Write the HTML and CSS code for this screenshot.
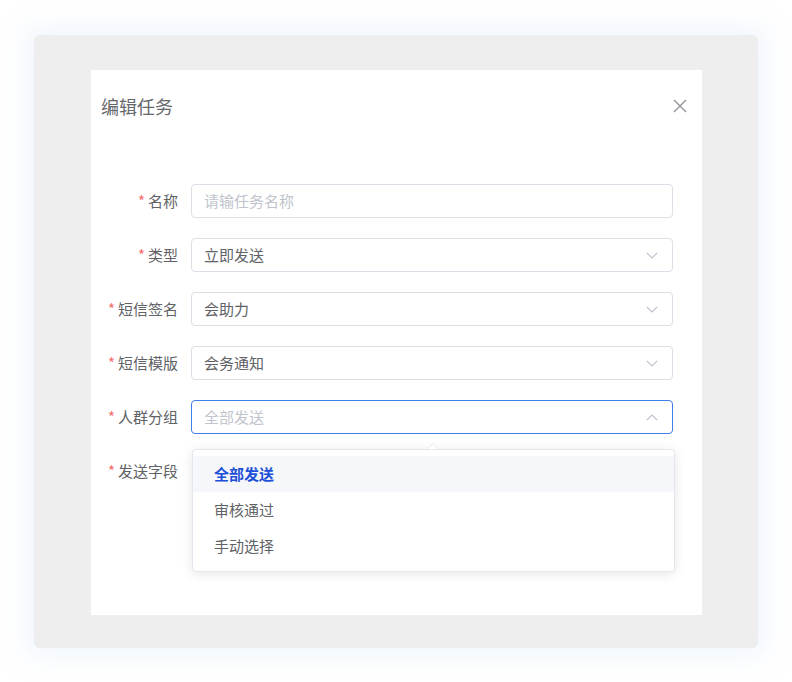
FILE: index.html
```html
<!DOCTYPE html>
<html lang="zh-CN">
<head>
<meta charset="utf-8">
<title>编辑任务</title>
<link rel="stylesheet" href="styles.css">
</head>
<body>
<div class="panel">
  <div class="dialog">
    <div class="dialog-header">
      <span class="dialog-title">编辑任务</span>
      <button class="close" aria-label="关闭">
        <svg width="14" height="14" viewBox="0 0 14 14"><path d="M1 1L13 13M13 1L1 13" stroke="#909399" stroke-width="1.4" fill="none"/></svg>
      </button>
    </div>
    <form class="form">
      <div class="row">
        <label class="label"><span class="req">*</span>名称</label>
        <div class="input placeholder">请输任务名称</div>
      </div>
      <div class="row">
        <label class="label"><span class="req">*</span>类型</label>
        <div class="input select">立即发送
          <svg class="chev" width="12" height="7" viewBox="0 0 12 7"><path d="M1 1L6 6L11 1" stroke="#c0c4cc" stroke-width="1.2" fill="none"/></svg>
        </div>
      </div>
      <div class="row">
        <label class="label"><span class="req">*</span>短信签名</label>
        <div class="input select">会助力
          <svg class="chev" width="12" height="7" viewBox="0 0 12 7"><path d="M1 1L6 6L11 1" stroke="#c0c4cc" stroke-width="1.2" fill="none"/></svg>
        </div>
      </div>
      <div class="row">
        <label class="label"><span class="req">*</span>短信模版</label>
        <div class="input select">会务通知
          <svg class="chev" width="12" height="7" viewBox="0 0 12 7"><path d="M1 1L6 6L11 1" stroke="#c0c4cc" stroke-width="1.2" fill="none"/></svg>
        </div>
      </div>
      <div class="row">
        <label class="label"><span class="req">*</span>人群分组</label>
        <div class="select-wrap">
          <div class="input select focused placeholder">全部发送
            <svg class="chev" width="12" height="7" viewBox="0 0 12 7"><path d="M1 6L6 1L11 6" stroke="#c0c4cc" stroke-width="1.2" fill="none"/></svg>
          </div>
          <div class="dropdown">
            <span class="arrow"></span>
            <ul class="options">
              <li class="option active">全部发送</li>
              <li class="option">审核通过</li>
              <li class="option">手动选择</li>
            </ul>
          </div>
        </div>
      </div>
      <div class="row">
        <label class="label"><span class="req">*</span>发送字段</label>
        <div class="field-empty"></div>
      </div>
    </form>
  </div>
</div>
</body>
</html>
```

FILE: styles.css
```css
* { box-sizing: border-box; }
html, body { margin: 0; padding: 0; }
body {
  background: #ffffff;
  font-family: "Noto Sans CJK SC", "Noto Sans", "Liberation Sans", sans-serif;
  width: 792px;
  height: 682px;
  overflow: hidden;
  padding: 35px 34px 0;
}
.panel {
  width: 724px;
  height: 613px;
  background: #eeeeee;
  border-radius: 6px;
  box-shadow: 0 0 22px 10px rgba(230, 240, 252, 0.5);
  padding: 35px 0 0 57px;
}
.dialog {
  width: 611px;
  height: 545px;
  background: #ffffff;
}
.dialog-header {
  display: flex;
  align-items: center;
  justify-content: space-between;
  padding: 24px 15px 0 10px;
  height: 48px;
}
.dialog-title {
  font-size: 18px;
  line-height: 24px;
  color: #66686c;
}
.close {
  border: 0;
  background: none;
  padding: 0;
  width: 14px;
  height: 14px;
  display: flex;
  cursor: pointer;
}
.form {
  margin: 66px 0 0;
  display: flex;
  flex-direction: column;
  gap: 20px;
}
.row {
  display: flex;
  align-items: center;
  height: 34px;
}
.label {
  width: 100px;
  padding-right: 13px;
  text-align: right;
  font-size: 15px;
  line-height: 20px;
  color: #606266;
  white-space: nowrap;
}
.req {
  color: #f56c6c;
  margin-right: 3px;
}
.input {
  width: 482px;
  height: 34px;
  border: 1px solid #dcdfe6;
  border-radius: 4px;
  padding: 0 12px;
  font-size: 15px;
  line-height: 32px;
  color: #606266;
  display: flex;
  align-items: center;
  justify-content: space-between;
  background: #fff;
}
.placeholder { color: #c0c4cc; }
.chev { margin-right: 2px; }
.focused { border-color: #3f7fe8; }
.select-wrap {
  position: relative;
  width: 482px;
}
.field-empty { width: 482px; height: 34px; }
.dropdown {
  position: absolute;
  left: 1px;
  top: 49px;
  width: 483px;
  background: #fff;
  border: 1px solid #e4e7ed;
  border-radius: 4px;
  box-shadow: 0 2px 12px rgba(0, 0, 0, 0.1);
  z-index: 5;
}
.arrow {
  position: absolute;
  left: 234px;
  top: -7px;
  width: 0;
  height: 0;
  border-left: 6px solid transparent;
  border-right: 6px solid transparent;
  border-bottom: 6px solid #e4e7ed;
}
.arrow::after {
  content: "";
  position: absolute;
  left: -5px;
  top: 1px;
  border-left: 5px solid transparent;
  border-right: 5px solid transparent;
  border-bottom: 5px solid #fff;
}
.options {
  list-style: none;
  margin: 0;
  padding: 6px 0 7px;
}
.option {
  height: 36px;
  line-height: 36px;
  padding: 0 21px;
  font-size: 15px;
  color: #606266;
}
.option.active {
  background: #f5f7fa;
  color: #1d4fd7;
  font-weight: 700;
}
```
